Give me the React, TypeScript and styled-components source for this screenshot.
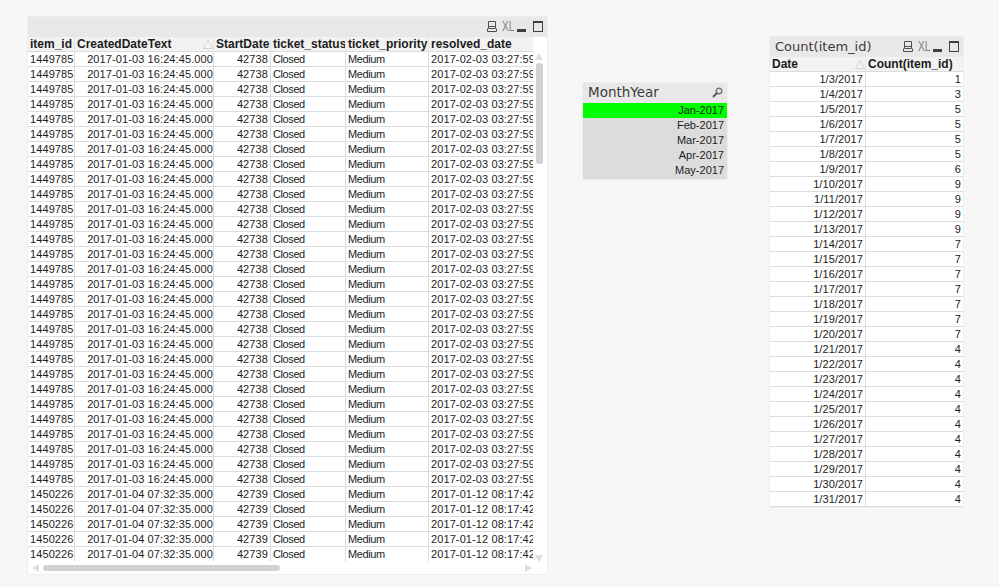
import styled, { createGlobalStyle } from "styled-components";

const GlobalStyle = createGlobalStyle`
  html, body {
    margin: 0;
    background: #f7f7f7;
    height: 587px;
    overflow: hidden;
  }
`;

const Sheet = styled.div`
  display: flex;
  align-items: flex-start;
  height: 587px;
  padding-left: 28px;
  box-sizing: border-box;
  font-family: "Liberation Sans", Arial, sans-serif;
  font-size: 11px;
  color: #1c1c1c;
`;

const Panel = styled.section<{ $width: number; $top: number; $left: number }>`
  width: ${(p) => p.$width}px;
  margin-top: ${(p) => p.$top}px;
  margin-left: ${(p) => p.$left}px;
  flex: none;
  background: #fff;
  border-radius: 2px;
  box-shadow: 0 0 0 1px #eeeeee;
`;

const Caption = styled.header<{ $size?: number }>`
  display: flex;
  align-items: center;
  justify-content: space-between;
  height: 20px;
  padding: 0 4px 2px 5px;
  box-sizing: border-box;
  background: #e8e8e8;
  font-family: "DejaVu Sans", sans-serif;
  font-size: ${(p) => p.$size ?? 13}px;
  color: #3c3c3c;
`;

const Tools = styled.div`
  display: flex;
  align-items: center;
  gap: 5px;
  margin-left: auto;
`;

const XlMark = styled.span`
  display: block;
  width: 10px;
  font-family: "Liberation Sans", sans-serif;
  font-size: 14px;
  line-height: 12px;
  color: #808080;
  transform: scaleX(0.72);
  transform-origin: left center;
  white-space: nowrap;
`;

const Body = styled.div`
  display: flex;
`;

const Table = styled.table<{ $width: number; $open?: boolean }>`
  width: ${(p) => p.$width}px;
  table-layout: fixed;
  border-collapse: separate;
  border-spacing: 0;
  flex: none;
  ${(p) =>
    p.$open &&
    `tbody tr:last-child td { border-bottom-color: transparent; }`}
`;

const HeadCell = styled.th`
  height: 15px;
  padding: 0 0 0 2px;
  box-sizing: border-box;
  background: #f2f2f2;
  border-bottom: 1px solid #dcdcdc;
  border-right: 1px solid #e4e4e4;
  font-size: 12px;
  font-weight: 700;
  line-height: 14px;
  color: #1c1c1c;
  text-align: left;
  white-space: nowrap;
  overflow: hidden;
  &:last-child {
    border-right: none;
  }
`;

const HeadInner = styled.div`
  display: flex;
  align-items: center;
  justify-content: space-between;
`;

const Cell = styled.td<{ $right?: boolean; $flush?: boolean }>`
  height: 15px;
  padding: 0 ${(p) => (p.$flush ? 0 : 2)}px 0 2px;
  box-sizing: border-box;
  border-bottom: 1px solid #dcdcdc;
  border-right: 1px solid #dcdcdc;
  line-height: 14px;
  letter-spacing: 0.1px;
  text-align: ${(p) => (p.$right ? "right" : "left")};
  white-space: nowrap;
  overflow: hidden;
  &:last-child {
    border-right: none;
  }
`;

const WordCell = styled(Cell)`
  letter-spacing: -0.4px;
`;

const VScroll = styled.div`
  width: 12px;
  height: 525px;
  display: flex;
  flex-direction: column;
  align-items: center;
  flex: none;
  padding-top: 16px;
  box-sizing: border-box;
`;

const VThumb = styled.div`
  width: 7px;
  height: 101px;
  margin-top: 3px;
  margin-bottom: auto;
  background: #d2d2d2;
  border-radius: 3px;
`;

const HScroll = styled.div`
  display: flex;
  align-items: center;
  height: 12px;
  padding: 0 15px 0 4px;
`;

const HThumb = styled.div`
  width: 237px;
  height: 6px;
  margin-left: 4px;
  margin-right: auto;
  background: #d2d2d2;
  border-radius: 3px;
`;

const ListRow = styled.div<{ $selected?: boolean }>`
  height: 15px;
  padding-right: 3px;
  background: ${(p) => (p.$selected ? "#00ff00" : "#dcdcdc")};
  line-height: 15px;
  text-align: right;
  color: #1c1c1c;
`;

const ListBottom = styled.div`
  height: 1px;
  background: #dcdcdc;
`;

const Arrow = ({ dir }: { dir: "up" | "down" | "left" | "right" }) => {
  const points = {
    up: "4,0 8,7 0,7",
    down: "0,0 8,0 4,7",
    left: "7,0 7,8 0,4",
    right: "0,0 7,4 0,8",
  }[dir];
  const vertical = dir === "up" || dir === "down";
  return (
    <svg
      width={vertical ? 8 : 7}
      height={vertical ? 7 : 8}
      style={{ flex: "none" }}
    >
      <polygon points={points} fill="#dedede" />
    </svg>
  );
};

const SortMark = () => (
  <svg width="10" height="9" style={{ flex: "none" }}>
    <path d="M5 .5 L9.5 8.5 H.5 Z" fill="#f6f6f6" stroke="#d4d4d4" />
  </svg>
);

const WindowIcons = () => (
  <Tools>
    <svg width="10" height="11" viewBox="0 0 10 11">
      <path
        d="M1.5 .5 H8.5 V7.5 H1.5 Z M1.5 5.5 H8.5 M.5 10.5 H9.5"
        fill="none"
        stroke="#505050"
      />
      <path d="M.5 7.5 V10.5 M9.5 7.5 V10.5" stroke="#505050" />
    </svg>
    <XlMark>XL</XlMark>
    <svg width="9" height="11">
      <rect x="0" y="8" width="9" height="3" fill="#404040" />
    </svg>
    <svg width="12" height="11">
      <rect x="2.5" y=".5" width="9" height="10" fill="none" stroke="#404040" />
      <rect x="2" y="0" width="10" height="2" fill="#404040" />
    </svg>
  </Tools>
);

const SearchIcon = () => (
  <svg width="11" height="11" viewBox="0 0 11 11">
    <circle cx="7" cy="4" r="2.8" fill="none" stroke="#777" strokeWidth="1.4" />
    <path d="M5 6 L1 10" stroke="#555" strokeWidth="2" />
  </svg>
);

const ticketColumns = [47, 139, 57, 75, 83, 104];
const ticketHeads = [
  "item_id",
  "CreatedDateText",
  "StartDate",
  "ticket_status",
  "ticket_priority",
  "resolved_date",
];

type Ticket = {
  id: string;
  created: string;
  start: string;
  resolved: string;
};

const first: Ticket = {
  id: "1449785",
  created: "2017-01-03 16:24:45.000",
  start: "42738",
  resolved: "2017-02-03 03:27:59",
};
const second: Ticket = {
  id: "1450226",
  created: "2017-01-04 07:32:35.000",
  start: "42739",
  resolved: "2017-01-12 08:17:42",
};
const tickets: Ticket[] = [
  ...Array(29).fill(first),
  ...Array(5).fill(second),
];

const months = ["Jan-2017", "Feb-2017", "Mar-2017", "Apr-2017", "May-2017"];

const counts = [
  1, 3, 5, 5, 5, 5, 6, 9, 9, 9, 9, 7, 7, 7, 7, 7, 7, 7, 4, 4, 4, 4, 4, 4, 4, 4,
  4, 4, 4,
];

export default function App() {
  return (
    <>
      <GlobalStyle />
      <Sheet>
        <Panel $width={519} $top={17} $left={0}>
          <Caption>
            <WindowIcons />
          </Caption>
          <Body>
            <Table $width={505} $open>
              <colgroup>
                {ticketColumns.map((w, i) => (
                  <col key={i} style={{ width: w }} />
                ))}
              </colgroup>
              <thead>
                <tr>
                  {ticketHeads.map((h) => (
                    <HeadCell key={h}>
                      <HeadInner>
                        {h}
                        {h === "CreatedDateText" && <SortMark />}
                      </HeadInner>
                    </HeadCell>
                  ))}
                </tr>
              </thead>
              <tbody>
                {tickets.map((t, i) => (
                  <tr key={i}>
                    <Cell>{t.id}</Cell>
                    <Cell $right $flush>
                      {t.created}
                    </Cell>
                    <Cell $right>{t.start}</Cell>
                    <WordCell>Closed</WordCell>
                    <WordCell>Medium</WordCell>
                    <Cell $flush>{t.resolved}</Cell>
                  </tr>
                ))}
              </tbody>
            </Table>
            <VScroll>
              <Arrow dir="up" />
              <VThumb />
              <Arrow dir="down" />
            </VScroll>
          </Body>
          <HScroll>
            <Arrow dir="left" />
            <HThumb />
            <Arrow dir="right" />
          </HScroll>
        </Panel>

        <Panel $width={144} $top={83} $left={36}>
          <Caption $size={13.5}>
            MonthYear
            <SearchIcon />
          </Caption>
          {months.map((m, i) => (
            <ListRow key={m} $selected={i === 0}>
              {m}
            </ListRow>
          ))}
          <ListBottom />
        </Panel>

        <Panel $width={193} $top={37} $left={43}>
          <Caption>
            Count(item_id)
            <WindowIcons />
          </Caption>
          <Table $width={193}>
            <colgroup>
              <col style={{ width: 96 }} />
              <col style={{ width: 97 }} />
            </colgroup>
            <thead>
              <tr>
                <HeadCell>
                  <HeadInner>
                    Date
                    <SortMark />
                  </HeadInner>
                </HeadCell>
                <HeadCell>Count(item_id)</HeadCell>
              </tr>
            </thead>
            <tbody>
              {counts.map((c, i) => (
                <tr key={i}>
                  <Cell $right>{`1/${i + 3}/2017`}</Cell>
                  <Cell $right>{c}</Cell>
                </tr>
              ))}
            </tbody>
          </Table>
        </Panel>
      </Sheet>
    </>
  );
}
